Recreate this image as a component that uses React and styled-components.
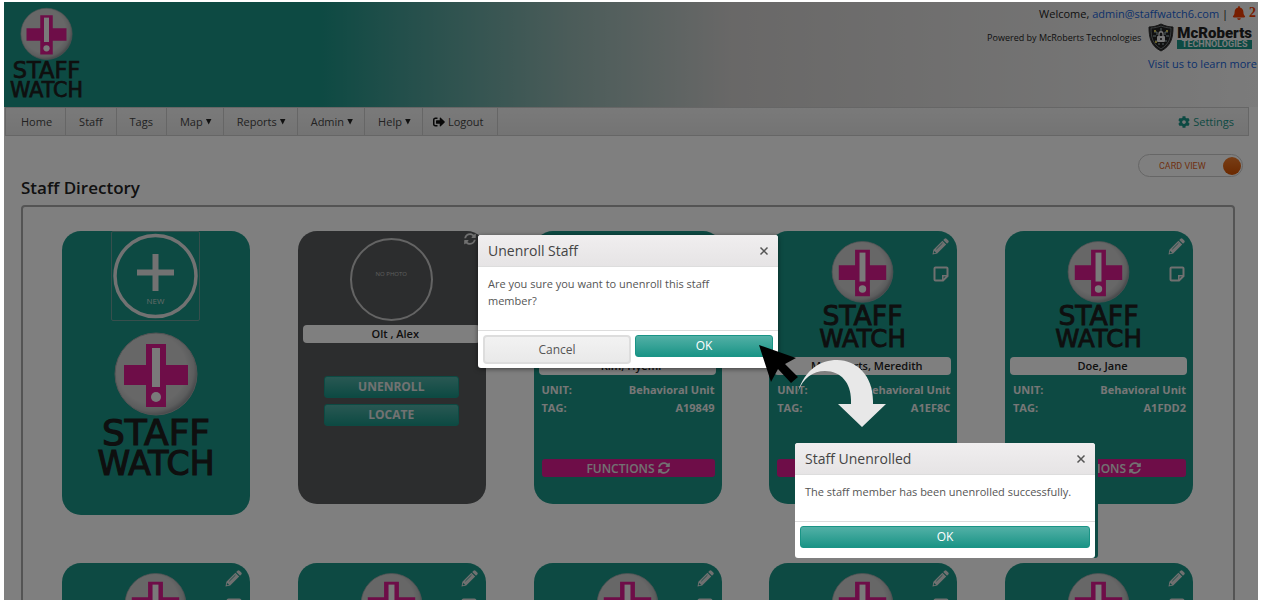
import React from "react";
import styled, { createGlobalStyle } from "styled-components";
import { FaBell, FaCog, FaSignOutAlt, FaSyncAlt } from "react-icons/fa";

const teal = "#1a9486";
const pink = "#dc1a90";

const GlobalStyle = createGlobalStyle`
  *, *::before, *::after { box-sizing: border-box; }
  body {
    margin: 0;
    background: #fff;
    color: #333;
    font-family: "Open Sans", "Noto Sans", sans-serif;
    font-size: 11px;
  }
  button { font-family: inherit; cursor: pointer; }
  a { text-decoration: none; }
`;

const Frame = styled.div`
  position: relative;
  height: calc(100vh - 9px);
  margin: 2px 9px 0 4px;
  overflow: hidden;
  background: #fff;
`;

const Scrim = styled.div`
  position: absolute;
  inset: 0;
  background: rgba(0, 0, 0, 0.5);
`;

const Header = styled.header`
  display: flex;
  justify-content: space-between;
  align-items: flex-start;
  height: 105px;
  padding: 5px 1px 0 5px;
  background: linear-gradient(90deg, ${teal} 25%, #489f97 32%, #96b8b3 45%, #d2d0cf 58%, #f6f6f6 100%);
`;

const LogoSvg = styled.svg`
  display: block;
  flex: none;
  width: ${(p) => p.$width}px;
  overflow: visible;
  font-family: "DejaVu Sans", sans-serif;
`;

const Account = styled.div`
  display: flex;
  flex-direction: column;
  align-items: flex-end;
  color: #222;
`;

const AccountRow = styled.div`
  display: flex;
  align-items: center;
  gap: 4px;
  height: ${(p) => p.$height}px;
  font-size: ${(p) => p.$size}px;
  white-space: nowrap;
`;

const BlueLink = styled.a`
  color: #1763d6;
`;

const AlertCount = styled.button`
  display: flex;
  align-items: center;
  gap: 3px;
  padding: 0 1px 0 0;
  border: 0;
  background: none;
  color: #f03c00;
  font-family: "Liberation Serif", serif;
  font-size: 14px;
  font-weight: 700;
`;

const Company = styled.span`
  display: flex;
  align-items: center;
  gap: 3px;
  padding: 0 5px 0 3px;
`;

const CompanyName = styled.span`
  display: flex;
  flex-direction: column;
  color: #222;
  font-family: Roboto, sans-serif;
  font-size: 15px;
  font-weight: 900;
  line-height: 14px;
`;

const CompanyTag = styled.span`
  background: ${teal};
  color: #f4f4f4;
  font-size: 9px;
  font-weight: 700;
  line-height: 9px;
  text-align: center;
`;

const Nav = styled.nav`
  display: flex;
  height: 29px;
  margin: 0 9px 0 1px;
  padding-left: 2px;
  border: 1px solid #ccc;
  background: linear-gradient(#f4f4f4, #e8e8e8);
`;

const NavItem = styled.a`
  display: flex;
  align-items: center;
  gap: 3px;
  padding-left: ${(p) => (p.$icon ? 10 : 13)}px;
  padding-right: ${(p) => (p.$menu ? 11 : 13)}px;
  border-right: 1px solid #ccc;
  color: #444;
  svg { color: #111; }
`;

const Caret = styled.span`
  width: 6px;
  height: 6px;
  background: #222;
  clip-path: polygon(0 0, 100% 0, 50% 100%);
`;

const SettingsLink = styled.a`
  display: flex;
  align-items: center;
  gap: 3px;
  margin-left: auto;
  padding-right: 14px;
  color: ${teal};
`;

const TitleBar = styled.div`
  display: flex;
  justify-content: space-between;
  align-items: flex-start;
  height: 69px;
  padding: 18px 15px 0 17px;
`;

const Title = styled.h1`
  align-self: flex-end;
  margin: 0;
  padding-bottom: 5px;
  color: #222;
  font-size: 17px;
  font-weight: 600;
  line-height: 24px;
`;

const ViewToggle = styled.button`
  display: flex;
  align-items: center;
  justify-content: space-between;
  width: 105px;
  height: 23px;
  padding: 0 1px 0 20px;
  border: 1px solid #ccc;
  border-radius: 12px;
  background: #fff;
  color: #e0651f;
  font-family: Roboto, sans-serif;
  font-size: 9px;
`;

const Knob = styled.span`
  width: 18px;
  height: 18px;
  border-radius: 50%;
  background: linear-gradient(#f07c2c, #d65200);
`;

const Directory = styled.main`
  display: grid;
  grid-template-columns: repeat(5, 188px);
  justify-content: space-between;
  align-items: start;
  row-gap: 48px;
  margin: 0 23px 0 17px;
  padding: 24px 40px 24px 39px;
  border: 2px solid #a8a8a8;
  border-radius: 4px;
`;

const Card = styled.article`
  position: relative;
  display: flex;
  flex-direction: column;
  align-items: center;
  height: ${(p) => (p.$tall ? 284 : 273)}px;
  padding: ${(p) => p.$top}px 6px 0 5px;
  border-radius: 19px;
  background: ${(p) => (p.$dark ? "#595b5d" : teal)};
  color: #eee;
`;

const NewButton = styled.button`
  display: block;
  margin-bottom: 10px;
  padding: 0;
  border: 1px solid #6f9f9a;
  border-radius: 2px;
  background: none;
  color: #eee;
  svg { display: block; }
`;

const CardTools = styled.div`
  position: absolute;
  top: ${(p) => p.$top}px;
  right: ${(p) => p.$right}px;
  display: flex;
  flex-direction: column;
  align-items: center;
  gap: 11px;
`;

const IconButton = styled.button`
  display: flex;
  padding: 0;
  border: 0;
  background: none;
  color: #e0e0e0;
`;

const Photo = styled.div`
  display: flex;
  justify-content: center;
  width: 83px;
  height: 83px;
  padding-top: 30px;
  border: 2px solid #c8c8c8;
  border-radius: 50%;
  color: #bbb;
  font-size: 6px;
`;

const StaffName = styled.div`
  align-self: stretch;
  height: 18px;
  margin-top: ${(p) => p.$gap}px;
  padding-left: 8px;
  border-radius: 4px;
  background: #fff;
  color: #222;
  font-size: 11px;
  font-weight: 600;
  line-height: 18px;
  text-align: center;
`;

const Facts = styled.dl`
  display: grid;
  grid-template-columns: auto auto;
  justify-content: space-between;
  align-self: stretch;
  margin: 6px 1px 0 3px;
  font-size: 11px;
  font-weight: 700;
  line-height: 18px;
  dd { margin: 0; text-align: right; }
`;

const FunctionsButton = styled.button`
  display: flex;
  align-items: center;
  justify-content: center;
  align-self: stretch;
  gap: 3px;
  height: 18px;
  margin: 42px 1px 0 3px;
  padding: 0;
  border: 0;
  border-radius: 3px;
  background: ${pink};
  color: #e4e4e4;
  font-size: 12px;
  font-weight: 600;
`;

const CardActions = styled.div`
  display: flex;
  flex-direction: column;
  gap: 6px;
  width: 135px;
  margin-top: 33px;
`;

const TealButton = styled.button`
  flex: 1;
  height: 22px;
  padding: 0;
  border: 1px solid ${teal};
  border-radius: 3px;
  background: linear-gradient(#52b0a6, ${teal});
  color: #fff;
  font-size: 12px;
  font-weight: ${(p) => (p.$bold ? 700 : 500)};
  line-height: 20px;
  ${CardActions} & { flex: none; color: #e4e4e4; }
`;

const PlainButton = styled.button`
  width: 148px;
  height: 29px;
  border: 2px solid #ddd;
  border-radius: 4px;
  background: linear-gradient(#f2f2f2, #e9e9e9);
  color: #555;
  font-size: 12px;
`;

const Dialog = styled.section`
  position: absolute;
  left: ${(p) => p.$x}px;
  top: ${(p) => p.$y}px;
  width: 300px;
  overflow: hidden;
  border-radius: 3px;
  background: #fff;
  box-shadow: ${(p) => (p.$edge ? "3px 0 0 #0d4a43" : "0 1px 5px rgba(0, 0, 0, 0.5)")};
`;

const DialogHead = styled.header`
  display: flex;
  align-items: center;
  justify-content: space-between;
  height: 32px;
  padding: 0 9px 0 10px;
  border-bottom: 1px solid #ddd;
  background: linear-gradient(#f0eeef, #e6e4e5);
`;

const DialogTitle = styled.h2`
  margin: 0;
  color: #444;
  font-size: 14px;
  font-weight: 400;
`;

const CloseButton = styled.button`
  display: flex;
  padding: 0;
  border: 0;
  background: none;
  color: #555;
`;

const DialogText = styled.p`
  height: ${(p) => p.$height}px;
  margin: 0;
  padding: 8px 10px 0;
  padding-right: ${(p) => (p.$wide ? 10 : 50)}px;
  color: #555;
  font-size: 11px;
  line-height: 17px;
`;

const DialogFoot = styled.footer`
  display: flex;
  align-items: flex-start;
  gap: 4px;
  padding: 4px 5px;
  padding-bottom: ${(p) => (p.$deep ? 10 : 4)}px;
  border-top: 1px solid #ddd;
`;

const Overlay = styled.svg`
  position: absolute;
  left: ${(p) => p.$x}px;
  top: ${(p) => p.$y}px;
`;

function Logo({ width }) {
  const id = `disc${width}`;
  return (
    <LogoSvg $width={width} viewBox="0 0 120 146" role="img" aria-label="Staff Watch">
      <defs>
        <radialGradient id={id} cx="45%" cy="44%" r="58%">
          <stop offset="72%" stopColor="#cfcfcf" />
          <stop offset="88%" stopColor="#b8babb" />
          <stop offset="100%" stopColor="#85898e" />
        </radialGradient>
      </defs>
      <circle cx="60" cy="43" r="41" fill={`url(#${id})`} stroke="#a3a7a9" />
      <path d="M50 13h20v21h22v20H70v22H50V54H28V34h22z" fill={pink} />
      <path d="M56 17h8v39h-8z" fill="#f4f4f4" />
      <circle cx="60" cy="66" r="5" fill="#f4f4f4" />
      <g fill="#1e1e1e" stroke="#1e1e1e" strokeWidth="1.2" textAnchor="middle">
        <text x="60" y="114" fontSize="36">STAFF</text>
        <text x="60" y="144" fontSize="33">WATCH</text>
      </g>
    </LogoSvg>
  );
}

function Shield() {
  return (
    <svg width="26" height="29" viewBox="0 0 26 29" aria-hidden="true">
      <path d="M13 1c4 2 8 3 12 3 0 11-2 19-12 24C3 23 1 15 1 4c4 0 8-1 12-3z" fill="#222" stroke="#333" />
      <path d="M13 3c3 1 6 2 10 2 0 10-2 16-10 21C5 21 3 15 3 5c4 0 7-1 10-2z" fill="none" stroke="#9aa4a6" strokeWidth="0.7" />
      <g fill="none" stroke="#a9c4c6" strokeWidth="1">
        <path d="M6 9h3v3M20 9h-3v3M5 13h3M21 13h-3M7 18h2M19 18h-2M13 5v3M11 22v-2M15 22v-2" />
      </g>
      <path d="M11 13v-2c0-3 4-3 4 0v2" fill="none" stroke="#eee" strokeWidth="1.3" />
      <rect x="9" y="13" width="8" height="6" rx="1" fill="#eee" />
      <circle cx="13" cy="16" r="1" fill="#222" />
      <path d="M6 7h2v2H6zM18 7h2v2h-2zM7 18h2v2H7z" fill="#d4c45a" />
    </svg>
  );
}

function Pencil() {
  return (
    <svg width="17" height="17" viewBox="0 0 17 17" aria-hidden="true">
      <path d="M12.5.7q1-.9 2 0l1.800 1.800q.9 1 0 2L15 5.800 11.200 2zM10.400 2.800l3.800 3.800-9 9L.5 16.500l.9-4.700z" fill="currentColor" />
      <path d="M4.300 11.200l6.200-6.200" stroke={teal} strokeWidth="0.8" />
      <path d="M2.200 12.900l1.900 1.900-1.800.5-.6-.6z" fill={teal} />
    </svg>
  );
}

function Note() {
  return (
    <svg width="16" height="16" viewBox="0 0 16 16" aria-hidden="true">
      <path d="M2.500 1.500h11q1 0 1 1v7.500l-4.500 4.500H2.500q-1 0-1-1v-11q0-1 1-1z" fill="none" stroke="currentColor" strokeWidth="2" />
      <path d="M9.800 14.500V9.800h4.700" fill="none" stroke="currentColor" strokeWidth="1.600" />
    </svg>
  );
}

function Cross() {
  return (
    <svg width="10" height="10" viewBox="0 0 10 10" aria-hidden="true">
      <path d="M1.500 1.500l7 7M8.500 1.500l-7 7" stroke="currentColor" strokeWidth="1.500" />
    </svg>
  );
}

function StaffCard({ name, tag }) {
  return (
    <Card $top={9}>
      <Logo width={89} />
      <CardTools $top={7} $right={8}>
        <IconButton aria-label="Edit"><Pencil /></IconButton>
        <IconButton aria-label="Notes"><Note /></IconButton>
      </CardTools>
      {name && (
        <>
          <StaffName $gap={9}>{name}</StaffName>
          <Facts>
            <dt>UNIT:</dt>
            <dd>Behavioral Unit</dd>
            <dt>TAG:</dt>
            <dd>{tag}</dd>
          </Facts>
          <FunctionsButton>FUNCTIONS <FaSyncAlt size={12} /></FunctionsButton>
        </>
      )}
    </Card>
  );
}

const menu = [
  ["Home"],
  ["Staff"],
  ["Tags"],
  ["Map", true],
  ["Reports", true],
  ["Admin", true],
  ["Help", true],
];

const staff = [
  ["Kim, Hyemi", "A19849"],
  ["McRoberts, Meredith", "A1EF8C"],
  ["Doe, Jane", "A1FDD2"],
];

export default function App() {
  return (
    <>
      <GlobalStyle />
      <Frame>
        <Header>
          <Logo width={75} />
          <Account>
            <AccountRow $height={12} $size={11}>
              <span>Welcome, <BlueLink href="#account">admin@staffwatch6.com</BlueLink> |</span>
              <AlertCount aria-label="2 alerts"><FaBell size={14} />2</AlertCount>
            </AccountRow>
            <AccountRow $height={37} $size={9}>
              <span>Powered by McRoberts Technologies</span>
              <Company>
                <Shield />
                <CompanyName>McRoberts<CompanyTag>TECHNOLOGIES</CompanyTag></CompanyName>
              </Company>
            </AccountRow>
            <AccountRow $height={14} $size={11}>
              <BlueLink href="#learn">Visit us to learn more</BlueLink>
            </AccountRow>
          </Account>
        </Header>
        <Nav>
          {menu.map(([label, more]) => (
            <NavItem href="#" key={label} $menu={more}>{label}{more && <Caret />}</NavItem>
          ))}
          <NavItem href="#" $icon><FaSignOutAlt size={12} />Logout</NavItem>
          <SettingsLink href="#"><FaCog size={12} />Settings</SettingsLink>
        </Nav>
        <TitleBar>
          <Title>Staff Directory</Title>
          <ViewToggle>CARD VIEW<Knob /></ViewToggle>
        </TitleBar>
        <Directory>
          <Card $tall $top={0}>
            <NewButton aria-label="New staff member">
              <svg width="87" height="88" viewBox="0 0 87 88">
                <circle cx="43.500" cy="44" r="40.500" fill="none" stroke="#e4e4e4" strokeWidth="3.500" />
                <path d="M43.500 22v37M25 40.500h37" stroke="#e4e4e4" strokeWidth="6" />
                <text x="43.500" y="72" fontSize="8" fill="#c8d4d2" textAnchor="middle">NEW</text>
              </svg>
            </NewButton>
            <Logo width={120} />
          </Card>
          <Card $dark $top={7}>
            <CardTools $top={2} $right={10}>
              <IconButton aria-label="Refresh"><FaSyncAlt size={12} /></IconButton>
            </CardTools>
            <Photo>NO PHOTO</Photo>
            <StaffName $gap={4}>Olt , Alex</StaffName>
            <CardActions>
              <TealButton $bold>UNENROLL</TealButton>
              <TealButton $bold>LOCATE</TealButton>
            </CardActions>
          </Card>
          {staff.map(([name, tag]) => <StaffCard key={tag} name={name} tag={tag} />)}
          {[1, 2, 3, 4, 5].map((n) => <StaffCard key={n} />)}
        </Directory>
        <Scrim />
        <Dialog $x={474} $y={233} role="dialog" aria-label="Unenroll Staff">
          <DialogHead>
            <DialogTitle>Unenroll Staff</DialogTitle>
            <CloseButton aria-label="Close"><Cross /></CloseButton>
          </DialogHead>
          <DialogText $height={63}>Are you sure you want to unenroll this staff member?</DialogText>
          <DialogFoot>
            <PlainButton>Cancel</PlainButton>
            <TealButton>OK</TealButton>
          </DialogFoot>
        </Dialog>
        <Overlay $x={753} $y={341} width="132" height="88" viewBox="0 0 132 88" aria-hidden="true">
          <path d="M41 49C48 26 64 17 80 17C100 17 116 33 116 58V61H129L105 84L81 61H94V57C94 40 84 28 68 28C56 28 46 35 41 49z" fill="#e8e8e8" />
          <path d="M2 2l37 13-11 6 13 13-7 6-13-14-7 13z" fill="#000" />
        </Overlay>
        <Dialog $x={791} $y={441} $edge role="dialog" aria-label="Staff Unenrolled">
          <DialogHead>
            <DialogTitle>Staff Unenrolled</DialogTitle>
            <CloseButton aria-label="Close"><Cross /></CloseButton>
          </DialogHead>
          <DialogText $height={46} $wide>The staff member has been unenrolled successfully.</DialogText>
          <DialogFoot $deep>
            <TealButton>OK</TealButton>
          </DialogFoot>
        </Dialog>
      </Frame>
    </>
  );
}
